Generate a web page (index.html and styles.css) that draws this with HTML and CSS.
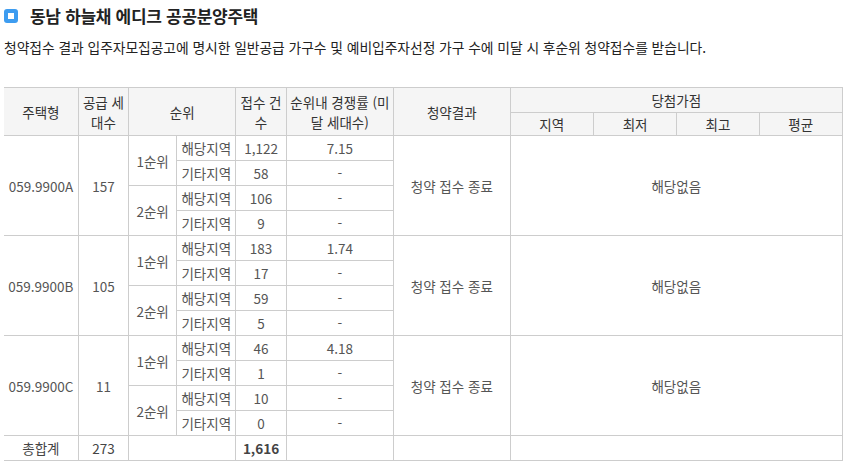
FILE: index.html
```html
<!DOCTYPE html>
<html lang="ko">
<head>
<meta charset="utf-8">
<link rel="stylesheet" href="styles.css">
</head>
<body>
<div class="page">
  <h2 class="title"><span class="ico"></span>동남 하늘채 에디크 공공분양주택</h2>
  <p class="desc">청약접수 결과 입주자모집공고에 명시한 일반공급 가구수 및 예비입주자선정 가구 수에 미달 시 후순위 청약접수를 받습니다.</p>
  <table class="tbl">
    <colgroup>
      <col class="c1"><col class="c2"><col class="c3"><col class="c4"><col class="c5"><col class="c6"><col class="c7"><col class="c8"><col class="c9"><col class="c10"><col class="c11">
    </colgroup>
    <thead>
      <tr class="h1">
        <th rowspan="2">주택형</th>
        <th rowspan="2">공급 세<br>대수</th>
        <th rowspan="2" colspan="2">순위</th>
        <th rowspan="2">접수 건<br>수</th>
        <th rowspan="2">순위내 경쟁률 (미<br>달 세대수)</th>
        <th rowspan="2">청약결과</th>
        <th colspan="4">당첨가점</th>
      </tr>
      <tr class="h2">
        <th>지역</th><th>최저</th><th>최고</th><th>평균</th>
      </tr>
    </thead>
    <tbody>
      <tr><td rowspan="4">059.9900A</td><td rowspan="4">157</td><td rowspan="2">1순위</td><td>해당지역</td><td>1,122</td><td>7.15</td><td rowspan="4">청약 접수 종료</td><td rowspan="4" colspan="4">해당없음</td></tr>
      <tr><td>기타지역</td><td>58</td><td>-</td></tr>
      <tr><td rowspan="2">2순위</td><td>해당지역</td><td>106</td><td>-</td></tr>
      <tr><td>기타지역</td><td>9</td><td>-</td></tr>

      <tr><td rowspan="4">059.9900B</td><td rowspan="4">105</td><td rowspan="2">1순위</td><td>해당지역</td><td>183</td><td>1.74</td><td rowspan="4">청약 접수 종료</td><td rowspan="4" colspan="4">해당없음</td></tr>
      <tr><td>기타지역</td><td>17</td><td>-</td></tr>
      <tr><td rowspan="2">2순위</td><td>해당지역</td><td>59</td><td>-</td></tr>
      <tr><td>기타지역</td><td>5</td><td>-</td></tr>

      <tr><td rowspan="4">059.9900C</td><td rowspan="4">11</td><td rowspan="2">1순위</td><td>해당지역</td><td>46</td><td>4.18</td><td rowspan="4">청약 접수 종료</td><td rowspan="4" colspan="4">해당없음</td></tr>
      <tr><td>기타지역</td><td>1</td><td>-</td></tr>
      <tr><td rowspan="2">2순위</td><td>해당지역</td><td>10</td><td>-</td></tr>
      <tr><td>기타지역</td><td>0</td><td>-</td></tr>

      <tr class="sum"><td>총합계</td><td>273</td><td colspan="2"></td><td class="b">1,616</td><td></td><td></td><td colspan="4"></td></tr>
    </tbody>
  </table>
</div>
</body>
</html>
```

FILE: styles.css
```css
html, body {
  margin: 0;
  padding: 0;
  background: #fff;
}
.page {
  padding: 0 0 0 4px;
  font-family: "Noto Sans CJK KR", "Noto Sans", sans-serif;
  color: #333;
}
.title {
  margin: 0;
  height: 30px;
  display: flex;
  align-items: center;
  font-size: 17px;
  font-weight: 700;
  color: #222;
  letter-spacing: -0.3px;
}
.ico {
  width: 14px;
  height: 14px;
  border-radius: 3px;
  background: #3d9cf0;
  position: relative;
  margin: 1px 12px 0 0;
  flex: none;
}
.ico::after {
  content: "";
  position: absolute;
  left: 4px;
  top: 4px;
  width: 6px;
  height: 6px;
  background: #fff;
}
.desc {
  margin: 6px 0 0;
  font-size: 13.8px;
  line-height: 22px;
  color: #222;
  letter-spacing: -0.05px;
}
.tbl {
  margin-top: 29px;
  border-collapse: collapse;
  table-layout: fixed;
  width: 839px;
  font-size: 13.5px;
  color: #555;
}
.c1 { width: 74px; }
.c2 { width: 50px; }
.c3 { width: 48px; }
.c4 { width: 59px; }
.c5 { width: 50px; }
.c6 { width: 107px; }
.c7 { width: 116px; }
.c8 { width: 83px; }
.c9 { width: 83px; }
.c10 { width: 82px; }
.c11 { width: 83px; }
.tbl th, .tbl td {
  border: 1px solid #cdcdcd;
  padding: 0;
  text-align: center;
  vertical-align: middle;
  white-space: nowrap;
}
.tbl th:first-child, .tbl td:first-child { border-left: none; }
.tbl th {
  background: #f5f5f5;
  color: #333;
  font-weight: 400;
  line-height: 20px;
}
.tbl tr.h1 th { height: 24px; }
.tbl tr.h2 th { height: 22px; }
.tbl td {
  height: 24px;
  line-height: 20px;
}
.tbl tr.sum td { height: 24px; color: #444; }
.tbl .b { font-weight: 700; }
```
